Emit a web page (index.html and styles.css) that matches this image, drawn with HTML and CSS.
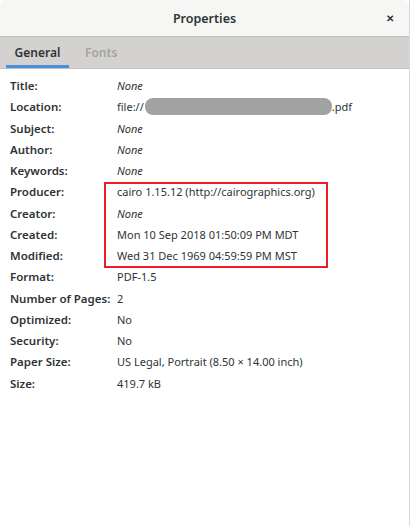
FILE: index.html
```html
<!DOCTYPE html>
<html>
<head>
<meta charset="utf-8">
<link rel="stylesheet" href="styles.css">
</head>
<body>
<div class="window">
  <div class="titlebar">
    <span class="title">Properties</span>
    <span class="close">&#x2715;</span>
  </div>
  <div class="tabs">
    <div class="tab active">General</div>
    <div class="tab">Fonts</div>
  </div>
  <div class="content">
    <div class="grid">
      <div class="label">Title:</div><div class="value it">None</div>
      <div class="label">Location:</div><div class="value">file://<span class="blur"></span>.pdf</div>
      <div class="label">Subject:</div><div class="value it">None</div>
      <div class="label">Author:</div><div class="value it">None</div>
      <div class="label">Keywords:</div><div class="value it">None</div>
      <div class="label">Producer:</div><div class="value">cairo 1.15.12 (http://cairographics.org)</div>
      <div class="label">Creator:</div><div class="value it">None</div>
      <div class="label">Created:</div><div class="value">Mon 10 Sep 2018 01:50:09 PM MDT</div>
      <div class="label">Modified:</div><div class="value">Wed 31 Dec 1969 04:59:59 PM MST</div>
      <div class="label">Format:</div><div class="value">PDF-1.5</div>
      <div class="label">Number of Pages:</div><div class="value">2</div>
      <div class="label">Optimized:</div><div class="value">No</div>
      <div class="label">Security:</div><div class="value">No</div>
      <div class="label">Paper Size:</div><div class="value">US Legal, Portrait (8.50 × 14.00 inch)</div>
      <div class="label">Size:</div><div class="value">419.7 kB</div>
    </div>
    <div class="highlight"></div>
  </div>
</div>
</body>
</html>
```
FILE: styles.css
```css
html, body {
  margin: 0;
  padding: 0;
  background: #ffffff;
}
body {
  font-family: "Noto Sans", "Open Sans", sans-serif;
  font-size: 11px;
  color: #2e3436;
}
.window {
  width: 410px;
  height: 526px;
  display: flex;
  flex-direction: column;
  background: #ffffff;
  box-sizing: border-box;
  border-right: 1px solid #d8d8d6;
}
.titlebar {
  height: 37px;
  flex: none;
  background: #f6f6f5;
  border-bottom: 1px solid #bfbfbd;
  border-radius: 6px 6px 0 0;
  box-sizing: border-box;
  display: flex;
  align-items: center;
  justify-content: center;
  position: relative;
}
.title {
  font-weight: 600;
  font-size: 12.5px;
  color: #2e3436;
}
.close {
  position: absolute;
  right: 15px;
  top: 11px;
  font-size: 10px;
  font-weight: bold;
  color: #2e3436;
}
.tabs {
  height: 32px;
  flex: none;
  background: #d3d2d0;
  border-bottom: 1px solid #c4c3c1;
  box-sizing: border-box;
  display: flex;
  padding-left: 6px;
}
.tab {
  display: flex;
  align-items: center;
  font-weight: 600;
  font-size: 12px;
  color: #a3a3a1;
  box-sizing: border-box;
  border-bottom: 3px solid transparent;
  padding-top: 2px;
}
.tab.active {
  color: #2e3436;
  border-bottom-color: #4a90d9;
  width: 63px;
  justify-content: center;
}
.tab + .tab {
  padding-left: 16px;
}
.content {
  position: relative;
  padding: 6px 0 0 10px;
}
.grid {
  display: grid;
  grid-template-columns: 107px auto;
  grid-auto-rows: 21.25px;
  align-items: center;
}
.label {
  font-weight: 600;
  font-size: 11.5px;
  color: #2e3436;
  white-space: nowrap;
}
.value {
  color: #2e3436;
  white-space: nowrap;
  display: flex;
  align-items: center;
}
.it {
  font-style: italic;
}
.blur {
  display: inline-block;
  width: 187px;
  height: 17px;
  border-radius: 8px;
  background: #a2a2a2;
  margin-left: 1px;
}
.highlight {
  position: absolute;
  left: 104px;
  top: 113px;
  width: 224px;
  height: 86px;
  border: 2px solid #ee1c24;
  box-sizing: border-box;
}
```
